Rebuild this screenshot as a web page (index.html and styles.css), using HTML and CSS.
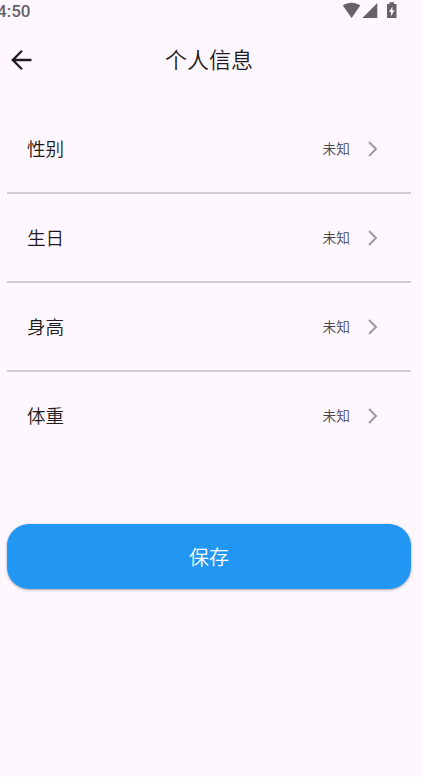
FILE: index.html
```html
<!DOCTYPE html>
<html lang="zh-CN">
<head>
    <meta charset="UTF-8"/>
    <title>个人信息</title>
    <link rel="stylesheet" href="styles.css">
</head>
<body>
<div class="status">
    <span class="time">4:50</span>
    <svg class="status-icons" width="56" height="20" viewBox="0 0 56 20">
        <path d="M0.8 5.6C6 1.9 13 1.9 18.3 5.6L9.6 18z"/>
        <path d="M35.3 3v15h-15z"/>
        <path fill-rule="evenodd" d="M45 4h2.500v-1.700h4.500v1.700h2.500V18h-9.500zM50.400 6.500l-3.300 5.500h2v4.200l3.400-6h-2.100z"/>
    </svg>
</div>
<div class="header">
    <svg class="back" width="22" height="22" viewBox="0 0 22 22">
        <path d="M20.500 11H2M11 1.800L1.800 11L11 20.200"/>
    </svg>
    <h1>个人信息</h1>
</div>
<ul class="list">
    <li><span class="label">性别</span><span class="value">未知</span><svg class="arrow" width="10" height="16" viewBox="0 0 10 16"><path d="M1 1l7 7l-7 7"/></svg></li>
    <li><span class="label">生日</span><span class="value">未知</span><svg class="arrow" width="10" height="16" viewBox="0 0 10 16"><path d="M1 1l7 7l-7 7"/></svg></li>
    <li><span class="label">身高</span><span class="value">未知</span><svg class="arrow" width="10" height="16" viewBox="0 0 10 16"><path d="M1 1l7 7l-7 7"/></svg></li>
    <li><span class="label">体重</span><span class="value">未知</span><svg class="arrow" width="10" height="16" viewBox="0 0 10 16"><path d="M1 1l7 7l-7 7"/></svg></li>
</ul>
<button class="save" type="button">保存</button>
</body>
</html>
```
FILE: styles.css
```css
* {box-sizing: border-box;}
body {
    margin: 0;
    height: 777px;
    overflow: hidden;
    background: #fef7ff;
    color: #1d1b20;
    font-family: Roboto, "Noto Sans CJK SC DemiLight", "Noto Sans CJK SC", sans-serif;
    font-weight: 350;
}
.status {display: flex; justify-content: space-between; height: 22px; padding-right: 24px; color: #66636a;}
.time {margin-left: -3px; font-size: 17px; line-height: 23px; font-weight: 500;}
.status-icons {fill: #666368;}
.header {display: flex; align-items: center; height: 76px; padding-left: 11px;}
.back {fill: none; stroke: #1d1b20; stroke-width: 2.3;}
.header h1 {margin: 0 0 0 132px; padding-top: 2px; font-size: 22px; line-height: 32px; font-weight: 350;}
.list {margin: 7px 11px 0 7px; padding: 0; list-style: none;}
.list li {display: flex; align-items: center; height: 88.9px; padding: 1px 33px 0 20px; border-bottom: 2px solid #d2cbd6;}
.list li:last-child {border-bottom-color: transparent;}
.label {flex: 1; padding-top: 2px; font-size: 18.6px; line-height: 28px;}
.value {margin-right: 18px; padding-top: 1px; font-size: 13.7px; line-height: 20px; color: #49454f;}
.arrow {fill: none; stroke: #9e9a9f; stroke-width: 2;}
.save {
    display: block;
    width: 404px;
    height: 65px;
    margin: 63.4px 0 0 7px;
    padding: 0;
    border: 0;
    border-radius: 22px;
    background: #2196f3;
    box-shadow: 0 1px 3px rgba(0, 0, 0, 0.35);
    color: #fff;
    font-family: inherit;
    font-size: 20px;
    font-weight: 350;
}
```
